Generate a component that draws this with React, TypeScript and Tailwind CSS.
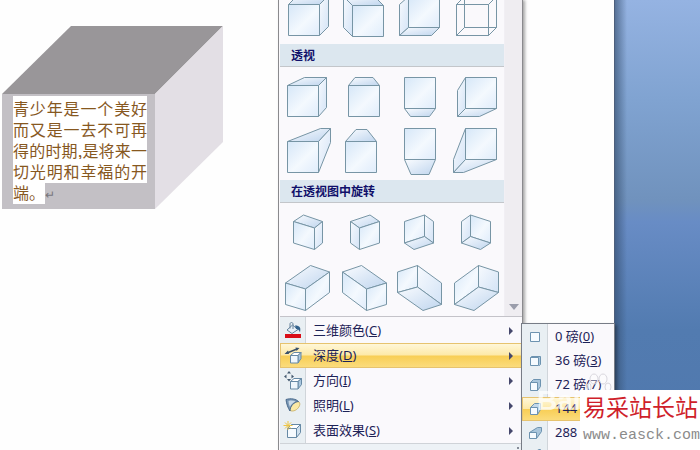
import React from "react";

type Face = [points: string, tone: "light" | "mid" | "dark" | "none"];
type Shape = { label: string; faces: Face[] };

const presets: Shape[] = [
  { label: "平行 1", faces: [["8.5,16.5 17.5,7.5 48.5,7.5 39.5,16.5", "dark"], ["39.5,16.5 48.5,7.5 48.5,38.5 39.5,47.5", "mid"], ["8.5,16.5 39.5,16.5 39.5,47.5 8.5,47.5", "light"]] },
  { label: "平行 2", faces: [["16.5,17.5 7.5,8.5 38.5,8.5 47.5,17.5", "dark"], ["16.5,17.5 7.5,8.5 7.5,39.5 16.5,48.5", "mid"], ["16.5,17.5 47.5,17.5 47.5,48.5 16.5,48.5", "light"]] },
  { label: "平行 3", faces: [["16.5,8.5 47.5,8.5 47.5,39.5 16.5,39.5", "light"], ["16.5,8.5 16.5,39.5 7.5,47.5 7.5,16.5", "mid"], ["16.5,39.5 47.5,39.5 39.5,47.5 7.5,47.5", "dark"]] },
  { label: "平行 4", faces: [["16.5,8.5 48.5,8.5 48.5,39.5 16.5,39.5", "none"], ["8.5,16.5 40.5,16.5 40.5,47.5 8.5,47.5", "none"], ["8.5,47.5 16.5,39.5 16.5,8.5 8.5,16.5", "none"], ["40.5,16.5 48.5,8.5 48.5,39.5 40.5,47.5", "none"]] },
];

const perspective: Shape[] = [
  { label: "透视 1", faces: [["7.5,18.5 24.5,10.5 46.5,10.5 38.5,18.5", "dark"], ["38.5,18.5 46.5,10.5 46.5,40.5 38.5,49.5", "mid"], ["7.5,18.5 38.5,18.5 38.5,49.5 7.5,49.5", "light"]] },
  { label: "透视 2", faces: [["12.5,18.5 19,10.5 37,10.5 43.5,18.5", "dark"], ["12.5,18.5 43.5,18.5 43.5,49.5 12.5,49.5", "light"]] },
  { label: "透视 3", faces: [["12.5,10.5 43.5,10.5 43.5,41.5 12.5,41.5", "light"], ["12.5,41.5 43.5,41.5 37.5,49.5 18.5,49.5", "dark"]] },
  { label: "透视 4", faces: [["17.5,10.5 48.5,10.5 48.5,41.5 17.5,41.5", "light"], ["17.5,10.5 17.5,41.5 9.5,49.5 9.5,23.5", "mid"], ["17.5,41.5 48.5,41.5 31.5,49.5 9.5,49.5", "dark"]] },
  { label: "透视 5", faces: [["7.5,18.5 40.5,5.5 50.5,5.5 38.5,18.5", "dark"], ["38.5,18.5 50.5,5.5 50.5,19.5 38.5,49.5", "mid"], ["7.5,18.5 38.5,18.5 38.5,49.5 7.5,49.5", "light"]] },
  { label: "透视 6", faces: [["9.5,18.5 20,6.5 31,6.5 40.5,18.5", "dark"], ["9.5,18.5 40.5,18.5 40.5,49.5 9.5,49.5", "light"]] },
  { label: "透视 7", faces: [["12.5,5.5 43.5,5.5 43.5,36.5 12.5,36.5", "light"], ["12.5,36.5 43.5,36.5 37,51.5 19,51.5", "dark"]] },
  { label: "透视 8", faces: [["17.5,5.5 48.5,5.5 48.5,36.5 17.5,36.5", "light"], ["17.5,5.5 17.5,36.5 5.5,49.5 5.5,36.5", "mid"], ["17.5,36.5 48.5,36.5 15.5,49.5 5.5,49.5", "dark"]] },
];

const rotated: Shape[] = [
  { label: "旋转 1", faces: [["13.5,18.5 23.5,12 42.5,18.5 34.5,25", "dark"], ["34.5,25 42.5,18.5 42.5,40 34.5,46.5", "mid"], ["13.5,18.5 34.5,25 34.5,46.5 13.5,40", "light"]] },
  { label: "旋转 2", faces: [["14.5,18.5 34,12 43.5,18.5 23.5,25", "dark"], ["14.5,18.5 23.5,25 23.5,46.5 14.5,40", "mid"], ["23.5,25 43.5,18.5 43.5,40 23.5,46.5", "light"]] },
  { label: "旋转 3", faces: [["12.5,18.5 32.5,12 32.5,33.5 12.5,40", "light"], ["32.5,12 41.5,18.5 41.5,40 32.5,33.5", "mid"], ["12.5,40 32.5,33.5 41.5,40 22,46.5", "dark"]] },
  { label: "旋转 4", faces: [["22.5,12 42.5,18.5 42.5,40 22.5,33.5", "light"], ["13.5,18.5 22.5,12 22.5,33.5 13.5,40", "mid"], ["13.5,40 22.5,33.5 42.5,40 32.5,46.5", "dark"]] },
  { label: "旋转 5", faces: [["5.5,24 30.5,6.5 49.5,13 25.5,30", "dark"], ["25.5,30 49.5,13 49.5,33.5 25.5,51.5", "light"], ["5.5,24 25.5,30 25.5,51.5 5.5,45.5", "light"]] },
  { label: "旋转 6", faces: [["6.5,13 25.5,6.5 50.5,24 30.5,30", "dark"], ["6.5,13 30.5,30 30.5,51.5 6.5,33.5", "light"], ["30.5,30 50.5,24 50.5,45.5 30.5,51.5", "light"]] },
  { label: "旋转 7", faces: [["5.5,13 25.5,6.5 25.5,28 5.5,33.5", "light"], ["25.5,6.5 49.5,24 49.5,45.5 25.5,28", "mid"], ["5.5,33.5 25.5,28 49.5,45.5 31,51.5", "dark"]] },
  { label: "旋转 8", faces: [["6.5,24 30.5,6.5 30.5,28 6.5,45.5", "light"], ["30.5,6.5 50.5,13 50.5,33.5 30.5,28", "mid"], ["6.5,45.5 30.5,28 50.5,33.5 26,51.5", "dark"]] },
];

const fills = { light: "url(#faceLight)", mid: "url(#faceMid)", dark: "url(#faceDark)", none: "none" };

function Gallery({ shapes }: { shapes: Shape[] }) {
  return (
    <div className="grid grid-cols-4">
      {shapes.map((s) => (
        <button key={s.label} type="button" aria-label={s.label} className="block h-14">
          <svg viewBox="0 0 56 56" className="mx-auto block size-14" stroke="#7795a5" strokeWidth="1" strokeLinejoin="round">
            {s.faces.map(([points, tone]) => (
              <polygon key={points} points={points} fill={fills[tone]} />
            ))}
          </svg>
        </button>
      ))}
    </div>
  );
}

function Heading({ children }: { children: React.ReactNode }) {
  return (
    <h2 className="h-[23px] border-b border-[#c3c6ca] bg-[#dce7ef] pl-[11px] text-[12px] leading-[23px] font-bold text-[#10106a]">
      {children}
    </h2>
  );
}

const menu = [
  {
    text: "三维颜色", hot: "C",
    icon: (
      <>
        <path d="M4 9 9.5 4l5.500 4.500L9 12.500z" fill="#e8f0f7" stroke="#66839c" />
        <path d="M7 7.500V3c0-2 3-2 3 0v5" fill="none" stroke="#66839c" />
        <path d="M12 4.500c5 0 6 2 5 7-1-3-2-3.500-4-3.500z" fill="#33628c" stroke="none" />
        <path d="M2 13h16v4H2z" fill="#d90d17" stroke="none" />
      </>
    ),
  },
  {
    text: "深度", hot: "D",
    icon: (
      <>
        <path d="M7.500 9.500 11 6.500h7l-3 3z" fill="#fff" />
        <path d="M15 9.500l3-3v6l-3 4.500z" fill="#a9c6de" />
        <path d="M7.500 9.500H15v7.500H7.500z" fill="#eef6fc" />
        <path d="M4 7 14 3" stroke="#39516b" strokeWidth="1.500" />
        <path d="M1.500 8 5 4.500 6 8zM16.500 2l-4-.5 1 3.500z" fill="#39516b" stroke="none" />
      </>
    ),
  },
  {
    text: "方向", hot: "I",
    icon: (
      <>
        <path d="M7.500 10.500 11 7.500h7.500l-3.500 3z" fill="#fff" />
        <path d="M15 10.500l3.500-3v6L15 18z" fill="#a9c6de" />
        <path d="M7.500 10.500H15V18H7.500z" fill="#eef6fc" />
        <path d="M6 0l2 2.500H4zM6 10.500 8 8H4zM1 5.500l2.500-2v4zM11 5.500l-2.500-2v4z" fill="#455a70" stroke="none" />
      </>
    ),
  },
  {
    text: "照明", hot: "L",
    icon: (
      <>
        <path d="M7 14.500C6 10 12 3.500 16 6c3 3-3 11-9 8.500z" fill="#fbe9a6" stroke="#cdb56c" />
        <path d="M3 3.500C8 2 13 3 15.500 5.500 11 6 7 10 7 15 5 12 3.500 8 3 3.500z" fill="#7896b4" stroke="#47688b" />
        <path d="M5.500 5c3-.8 5-.5 7 .5C10 6.500 8 8.500 7 11 6 9 5.500 7 5.500 5z" fill="#c9d9e8" stroke="none" />
      </>
    ),
  },
  {
    text: "表面效果", hot: "S",
    icon: (
      <>
        <path d="M4.500 7.500 8.500 3.500h9l-4 4z" fill="#fff" />
        <path d="M13.500 7.500l4-4v8l-4 5z" fill="#cfe0ee" />
        <path d="M4.500 7.500h9v9h-9z" fill="#f5fafe" />
        <path d="M5 0v9M.5 4.500h9M2 1.500l6 6M8 1.500l-6 6" stroke="#edc545" />
      </>
    ),
  },
];

const depths = [
  { text: "0 磅", hot: "0" },
  { text: "36 磅", hot: "3" },
  { text: "72 磅", hot: "7" },
  { text: "144 磅", hot: "1" },
  { text: "288 磅", hot: "2" },
];

const depthIcons = [
  <path d="M3.500 3.500h9v9h-9z" />,
  <>
    <path d="M3.500 4.500l1-1h9v8l-1 1z" fill="#a9c6dc" />
    <path d="M3.500 4.500h8v8h-8z" />
  </>,
  <>
    <path d="M3.500 5.500l3-3h7v7l-3 4z" fill="#a9c6dc" />
    <path d="M3.500 5.500h7v8h-7z" />
  </>,
  <>
    <path d="M3.500 6.500l4-4h6v6l-3 5z" fill="#c3d8e9" />
    <path d="M3.500 6.500h7v7h-7z" />
  </>,
  <>
    <path d="M2.500 7.500l8-5h4v4l-5 7z" fill="#a9c6dc" />
    <path d="M2.500 7.500h7v6h-7z" />
  </>,
  <path d="M3.500 7.500l8-7h2v6l-3 6h-7z" />,
];

const selected = "border-[#e6c36f] bg-[linear-gradient(#fff7d8,#fde9a8_48%,#f8ce55_52%,#fbdc7c)]";

function DepthIcon({ index }: { index: number }) {
  return (
    <svg viewBox="0 0 16 16" className="ml-1 size-4 shrink-0" fill="#f6fbff" stroke="#6d93b0" strokeLinejoin="round">
      {depthIcons[index]}
    </svg>
  );
}

export default function App() {
  return (
    <div className="relative flex h-screen overflow-hidden bg-[#fefefe] font-['Noto_Sans','Noto_Sans_CJK_SC',sans-serif] text-[13px] text-[#1d2257]">
      <main className="flex-1 pt-[25px] pl-[2px]">
        <section className="relative h-[185px] w-[222px]">
          <svg viewBox="0 0 222 185" className="block h-full w-full">
            <path d="M0 69 69 1h152l-68 68z" fill="#999699" />
            <path d="M153 69 221 1v116l-68 67z" fill="#e3dfe5" />
            <path d="M0 69h153v115H0z" fill="#c3c0c5" />
          </svg>
          <p className="absolute top-[73px] left-[11px] w-[134px] text-justify font-['Noto_Sans_CJK_SC',sans-serif] text-[16px] leading-[21px] text-[#87581f]">
            <span className="bg-white">青少年是一个美好而又是一去不可再得的时期,是将来一切光明和幸福的开端。</span>
            <span className="text-[12px] leading-none text-[#77757c]">↵</span>
          </p>
        </section>
      </main>

      <aside className="w-[86px] border-l border-[#4d5f7c] bg-[linear-gradient(#95b3e2,#80a3d1_100px,#7092bd_200px,#688cc5_222px,#527bb0_330px,#5078ad)]">
        <div className="h-full w-3 bg-linear-to-r from-[#304866]/60 to-transparent" />
      </aside>

      <nav aria-label="三维效果" className="absolute top-0 left-[278px] h-full w-[245px] overflow-hidden border-x border-[#8a8a8e] bg-[#faf9fc] pl-px shadow-[2px_0_3px_rgba(0,0,0,0.35)]">
        <svg className="absolute size-0" aria-hidden="true">
          <defs>
            <linearGradient id="faceLight" x1="0" y1="0" x2="1" y2="1"><stop offset="0" stopColor="#d6e7f8" /><stop offset=".55" stopColor="#f4f9fe" /><stop offset="1" stopColor="#dfecfb" /></linearGradient>
            <linearGradient id="faceMid" x1="0" y1="0" x2="1" y2="1"><stop offset="0" stopColor="#f7fafe" /><stop offset="1" stopColor="#d3e3f6" /></linearGradient>
            <linearGradient id="faceDark" x1="0" y1="0" x2="1" y2="1"><stop offset="0" stopColor="#fafcff" /><stop offset="1" stopColor="#bfd5ee" /></linearGradient>
          </defs>
        </svg>
        <div className="flex h-[317px] border-b border-[#c4c3c9]">
          <div className="w-56">
            <div className="flex h-11 flex-col justify-end overflow-hidden">
              <Gallery shapes={presets} />
            </div>
            <Heading>透视</Heading>
            <div className="h-[113px]"><Gallery shapes={perspective} /></div>
            <Heading>在透视图中旋转</Heading>
            <Gallery shapes={rotated} />
          </div>
          <div className="flex flex-1 items-end justify-center border-l border-[#f1eff4] bg-[#efedf1] pb-[6px]">
            <button type="button" aria-label="向下滚动">
              <svg viewBox="0 0 10 6" className="h-[6px] w-[10px]"><path d="M0 0h10L5 6z" fill="#9a9dab" /></svg>
            </button>
          </div>
        </div>
        <div className="bg-[linear-gradient(90deg,#e9eff3_25px,#d0d5da_25px,#d0d5da_26px,#faf9fc_26px)] pt-px">
          {menu.map((m, i) => (
            <button key={m.text} type="button" className={`flex h-[25px] w-full items-center border ${i === 1 ? selected : "border-transparent"}`}>
              <svg viewBox="0 0 20 20" className="ml-[2px] size-[20px]" fill="none" stroke="#6689a5" strokeLinejoin="round">{m.icon}</svg>
              <span className="ml-[10px] flex-1 text-left">{m.text}(<u>{m.hot}</u>)</span>
              <svg viewBox="0 0 4 8" className="mr-2 h-2 w-1"><path d="M0 0l4 4-4 4z" fill="#45486c" /></svg>
            </button>
          ))}
        </div>
        <div className="flex h-2 items-center justify-end border-t border-[#cfd3d8] bg-[#edf2f6] pr-[3px]">
          <span className="size-[2px] bg-[#858c98]" />
        </div>
      </nav>

      <nav aria-label="深度" className="absolute top-[323px] left-[521px] h-[140px] w-[94px] overflow-hidden border border-[#777c86] bg-[linear-gradient(90deg,#e9eff3_25px,#d0d5da_25px,#d0d5da_26px,#faf9fc_26px)] pt-px shadow-[2px_2px_3px_rgba(0,0,0,0.3)]">
        {depths.map((m, i) => (
          <button key={m.text} type="button" className={`flex h-6 w-full items-center border whitespace-nowrap ${i === 3 ? selected : "border-transparent"}`}>
            <DepthIcon index={i} />
            <span className="ml-3">{m.text}(<u>{m.hot}</u>)</span>
          </button>
        ))}
        <button type="button" aria-label="无限" className="flex h-6 w-full items-center border border-transparent">
          <DepthIcon index={5} />
        </button>
      </nav>

      <span className="absolute top-[376px] left-[537px] font-['Liberation_Sans',sans-serif] text-[28px] leading-[50px] font-bold text-white/70">Bai</span>
      <svg viewBox="0 0 26 22" className="absolute top-[373px] left-[586px] h-[22px] w-[26px]" fill="#fff" fillOpacity=".4" stroke="#d9d7de">
        <ellipse cx="8" cy="6" rx="4" ry="5" /><ellipse cx="17" cy="6" rx="4" ry="5" /><ellipse cx="3" cy="14" rx="2" ry="4" /><ellipse cx="22" cy="14" rx="3" ry="4" />
      </svg>
      <footer className="absolute right-0 bottom-0 h-[60px] w-[120px] bg-white pl-[3px] whitespace-nowrap">
        <p className="font-['Liberation_Serif','Noto_Sans_CJK_SC',serif] text-[23px] leading-[38px] text-[#cf1f2b]">易采站长站</p>
        <p className="font-['Liberation_Mono',monospace] text-[15px] leading-[16px] text-[#8b8b8b]">www.easck.com</p>
      </footer>
    </div>
  );
}
